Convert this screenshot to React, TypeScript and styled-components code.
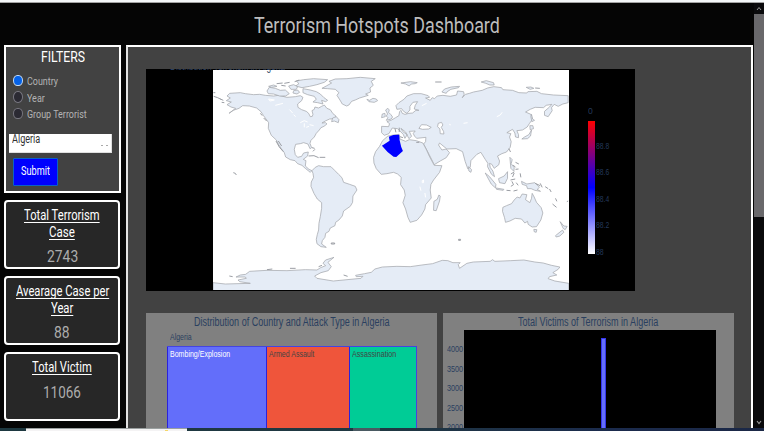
import React, { useLayoutEffect, useRef, useState } from "react";
import styled, { createGlobalStyle } from "styled-components";

const GlobalStyle = createGlobalStyle`
  * { box-sizing: border-box; }
  html, body { margin: 0; padding: 0; background: #050505; overflow: hidden; }
  body { font-family: Roboto, "Liberation Sans", sans-serif; }
`;

const FitBox = styled.span<{ $w: number }>`
  display: block;
  flex: none;
  width: ${(p) => p.$w}px;
  white-space: nowrap;
`;
const FitInner = styled.span`
  display: inline-block;
  vertical-align: top;
  transform-origin: 0 50%;
`;

/** Condenses a single line of text to a fixed width. */
function Fit({ w, children }: { w: number; children: React.ReactNode }) {
  const ref = useRef<HTMLSpanElement>(null);
  const [scale, setScale] = useState(1);
  useLayoutEffect(() => {
    if (ref.current) setScale(w / ref.current.offsetWidth);
  }, [w]);
  return (
    <FitBox $w={w}>
      <FitInner ref={ref} style={{ transform: `scaleX(${scale})` }}>
        {children}
      </FitInner>
    </FitBox>
  );
}

const Page = styled.div`
  width: 764px;
  height: 431px;
  display: flex;
  flex-direction: column;
  overflow: hidden;
  background: #050505;
`;
const TopStrip = styled.div`
  flex: none;
  height: 3px;
  background: #f4f7f8;
  border-bottom: 1px solid #a3a3a3;
`;
const Viewport = styled.div`
  height: 425px;
  display: grid;
  grid-template-columns: 754px 10px;
`;
const Content = styled.div`
  display: flex;
  flex-direction: column;
  min-height: 0;
`;
const Header = styled.header`
  flex: none;
  height: 42px;
  padding-left: 254px;
  padding-top: 1px;
  color: #bdbdbd;
  font-size: 22.5px;
  line-height: 43px;
`;
const Body = styled.div`
  height: 383px;
  display: grid;
  grid-template-columns: 117px 627px;
  column-gap: 5px;
  padding-left: 4px;
`;
const Sidebar = styled.aside`
  display: flex;
  flex-direction: column;
  gap: 7px;
`;
const Filters = styled.section`
  flex: none;
  height: 148px;
  border: 2px solid #fff;
  background: #424242;
  padding-left: 3px;
`;
const FilterTitle = styled.h2`
  margin: 0 0 6px 32px;
  padding-top: 1px;
  height: 19px;
  font-weight: 400;
  font-size: 15.5px;
  line-height: 18px;
  color: #fff;
`;
const Option = styled.label`
  display: flex;
  align-items: center;
  gap: 4px;
  height: 16.6px;
  padding-left: 4px;
  color: #b4b4b4;
  font-size: 11.5px;
  line-height: 16px;
  & > :last-child {
    padding-top: 2px;
  }
`;
const Radio = styled.span<{ $on?: boolean }>`
  width: 9.5px;
  height: 11.5px;
  border-radius: 50%;
  border: 1px solid ${(p) => (p.$on ? "#c4dcf7" : "#77767f")};
  background: ${(p) => (p.$on ? "#0562e8" : "#2b2a33")};
`;
const Select = styled.div`
  display: flex;
  justify-content: space-between;
  width: 103px;
  height: 19px;
  margin-top: 12px;
  padding: 0 3px 0 2.5px;
  background: #fff;
  border: 1px solid #e0e0e0;
  border-width: 0 1px 1px 0;
  color: #333;
  font-size: 12px;
  line-height: 10px;
`;
const SelectDots = styled.span`
  display: flex;
  gap: 3px;
  padding-top: 11px;
  &::before, &::after {
    content: "";
    width: 2px;
    height: 1.5px;
    background: #aaa;
  }
`;
const Submit = styled.button`
  display: flex;
  justify-content: center;
  align-items: center;
  width: 45px;
  height: 28px;
  margin: 5px 0 0 4px;
  padding: 0 0 1px;
  background: #0000fe;
  border: 1px solid #0b60c8;
  border-radius: 1px;
  color: #fff;
  font: 12px Roboto, sans-serif;
`;
const Stat = styled.section`
  flex: none;
  display: flex;
  flex-direction: column;
  align-items: center;
  width: 116px;
  height: 69px;
  padding-top: 5px;
  border: 2px solid #fff;
  border-radius: 4px;
  background: #272727;
`;
const StatTitle = styled.div`
  height: 16.7px;
  color: #fff;
  font-size: 14px;
  line-height: 17px;
  & ${FitInner} {
    text-decoration: underline;
    text-decoration-thickness: 1px;
    text-underline-offset: 2px;
    text-decoration-skip-ink: none;
  }
`;
const StatValue = styled.div`
  margin-top: 6px;
  color: #adadad;
  font-size: 17px;
  line-height: 20px;
`;
const Main = styled.main`
  height: 383px;
  border: 2px solid #fff;
  border-bottom: 0;
  border-left-color: #e2e2e2;
  background: #424242;
  padding: 22px 0 0 18px;
  display: flex;
  flex-direction: column;
  overflow: hidden;
`;
const MapPanel = styled.section`
  flex: none;
  position: relative;
  display: flex;
  width: 489px;
  height: 222px;
  padding: 1px 0 0 67px;
  background: #000;
  overflow: hidden;
`;
const MapTitle = styled.div`
  position: absolute;
  left: 24px;
  top: -10px;
  color: #2a3f5f;
  font: 12px/14px "Liberation Sans", sans-serif;
`;
const MapSvg = styled.svg`
  display: block;
  flex: none;
  width: 355.5px;
  height: 220px;
  background: #fff;
`;
const Legend = styled.div`
  margin-left: 19px;
  padding-top: 36px;
  color: #24395a;
  font: 9.5px/10px "Liberation Sans", sans-serif;
`;
const LegendBody = styled.div`
  display: flex;
  gap: 1px;
  margin-top: 5px;
`;
const LegendBar = styled.div`
  width: 7px;
  height: 133px;
  background: linear-gradient(#f00, #00f 50%, #fff);
`;
const LegendTicks = styled.div`
  display: flex;
  flex-direction: column;
  gap: 16.4px;
  padding-top: 20px;
`;
const Charts = styled.div`
  flex: none;
  display: flex;
  gap: 6px;
  height: 140px;
  margin-top: 22px;
`;
const Card = styled.section`
  width: 291px;
  height: 140px;
  background: #808080;
  color: #2a3f5f;
  font-family: "Liberation Sans", sans-serif;
`;
const CardTitle = styled.h3<{ $left: number }>`
  margin: 0;
  height: 17px;
  padding: 2px 0 0 ${(p) => p.$left}px;
  font-weight: 400;
  font-size: 12px;
  line-height: 15px;
`;
const TreeRoot = styled.div`
  height: 16px;
  padding: 1px 0 0 23.5px;
  font-size: 9.5px;
  line-height: 12px;
`;
const Treemap = styled.div`
  display: grid;
  grid-template-columns: 98.5px 83px 67px;
  width: 249.5px;
  height: 110px;
  margin-left: 21px;
  border: 1px solid #4444e0;
  border-left-width: 0;
`;
const Cell = styled.div<{ $bg: string; $fg: string }>`
  padding: 1px 0 0 2px;
  border-left: 1px solid #2b22dd;
  background: ${(p) => p.$bg};
  color: ${(p) => p.$fg};
  font-size: 9.5px;
  line-height: 12px;
`;
const Chart = styled.div`
  display: flex;
`;
const Axis = styled.div`
  width: 20.5px;
  padding: 14px 0 0 4px;
  font-size: 9.5px;
  line-height: 10px;
  display: flex;
  flex-direction: column;
  gap: 9.6px;
`;
const Plot = styled.div`
  display: flex;
  flex-direction: column;
  align-items: center;
  width: 252.5px;
  height: 110px;
  padding: 5px 0 0 27px;
  background: #000;
`;
const BarMark = styled.div`
  width: 3px;
  height: 1px;
  background: #2c3d58;
`;
const Bar = styled.div`
  flex: none;
  width: 5px;
  height: 110px;
  margin-top: 2.5px;
  border: 1px solid #3535ee;
  background: #636efa;
`;
const Scrollbar = styled.div`
  height: 425px;
  display: flex;
  flex-direction: column;
  align-items: center;
  background: #0a0a0c;
`;
const Thumb = styled.div`
  width: 10px;
  height: 203px;
  background: #69686b;
`;
const Arrow = styled.svg`
  flex: none;
  display: block;
  width: 10px;
  height: 11px;
`;
const Spacer = styled.div`
  flex: 1;
`;
const Taskbar = styled.footer`
  height: 3px;
  display: flex;
  background: linear-gradient(90deg, #1d3840 0%, #203842 50%, #1b2b4d 80%, #1b2846);
`;
const TaskSearch = styled.div`
  display: flex;
  justify-content: flex-end;
  width: 161px;
  height: 3px;
  margin-left: 26px;
  padding: 1px 19px 0 0;
  background: #f4f3f4;
  border-top: 1px solid #9aa0a0;
`;
const TaskSpark = styled.span`
  width: 3px;
  height: 1px;
  background: #f5d76a;
`;
const TaskItem = styled.div`
  width: 27px;
  margin-left: 166px;
  background: #4a5a62;
`;

const LAND = [
  // North America
  "M-220,108L-212,100L-180,98L-165,101L-140,104L-122,103L-105,106L-80,108L-65,106L-40,112L-15,110L0,107L8,112L4,122L-8,132L-7,142L4,149L18,154L25,160L30,170L36,169L38,163L35,152L42,148L44,141L55,144L64,139L72,135L80,145L90,149L98,161L107,168L105,176L88,177L75,183L65,189L76,188L80,192L71,199L62,203L57,210L48,220L42,231L32,241L29,250L34,263L29,266L23,252L10,248L0,251L-14,253L-18,268L-15,284L-8,292L4,289L10,279L24,276L22,288L9,298L17,302L15,318L26,328L35,332L30,337L15,325L5,316L-8,311L-16,302L-30,299L-44,291L-48,278L-57,266L-66,252L-72,240L-87,226L-96,205L-95,188L-103,177L-111,166L-118,155L-131,144L-153,138L-173,137L-184,145L-201,151L-214,160L-194,145L-208,141L-220,134L-207,126L-222,122L-210,114Z",
  // Greenland
  "M65,85L78,78L94,69L86,64L105,57L140,56L180,52L225,56L213,64L219,76L209,84L211,96L196,102L204,106L178,114L165,120L154,124L146,135L139,138L126,132L119,120L110,106L116,98L105,88L82,86Z",
  // Arctic islands
  "M-100,93L-93,82L-75,85L-60,91L-45,90L-33,101L-44,108L-62,108L-80,102L-96,101Z",
  "M-12,63L10,59L40,56L82,59L72,67L50,74L28,79L5,83L-14,78L-4,71Z",
  "M8,86L30,90L48,95L60,102L70,112L82,121L76,125L64,121L68,132L52,128L38,126L48,118L42,109L22,104L8,98Z",
  "M-35,78L-20,74L-8,80L-12,88L-28,88Z",
  "M-20,92L-8,90L-2,97L-10,102L-22,99Z",
  "M-95,79L-80,75L-70,79L-86,82Z",
  "M97,174L108,170L116,179L114,188L102,183L94,185Z",
  // South America
  "M35,332L45,322L55,317L70,320L92,320L104,332L115,343L125,353L130,367L148,373L165,379L170,390L158,408L157,427L150,439L130,453L126,468L116,480L106,487L104,497L90,504L86,514L76,520L74,532L66,542L64,552L78,562L62,560L50,551L48,538L51,524L55,510L56,490L60,470L64,445L64,428L51,417L41,400L32,379L33,366L40,352L38,340Z",
  // Iceland, British Isles
  "M200,118L208,121L218,115L228,117L232,122L222,127L206,125Z",
  "M256,150L263,145L267,150L265,157L272,164L277,171L273,177L258,181L263,173L258,168L262,162Z",
  "M246,162L254,160L255,170L244,173Z",
  // Eurasia
  "M244,199L265,200L268,191L260,185L274,180L286,173L296,167L298,155L302,151L306,160L314,163L326,160L337,159L347,151L356,151L342,147L345,136L352,125L338,127L329,139L329,150L320,160L310,154L304,146L290,148L287,137L296,128L311,118L320,108L340,101L363,101L384,107L388,112L376,114L390,121L396,113L403,116L411,108L428,106L450,109L469,105L472,93L490,95L492,103L486,113L496,103L508,100L520,96L546,91L562,84L581,80L604,83L608,89L637,91L656,98L680,99L683,95L710,94L724,101L760,105L804,107L804,128L788,132L774,139L762,133L754,143L756,152L744,170L733,166L733,154L748,141L755,133L738,136L730,143L705,142L690,148L676,156L692,163L697,178L688,190L681,201L667,210L650,212L655,224L655,233L646,231L644,219L637,208L620,218L632,221L628,231L633,245L630,262L619,276L605,281L592,288L598,303L596,314L582,325L575,313L568,310L570,322L578,333L583,350L574,343L562,320L563,310L555,298L542,277L530,283L512,302L510,322L503,327L495,305L487,275L468,266L440,267L418,249L415,255L425,270L438,267L448,278L438,293L420,303L402,314L387,284L370,252L376,245L377,232L350,235L343,229L339,220L345,213L327,214L334,229L326,236L316,216L302,205L308,215L321,224L314,235L309,223L292,206L276,204L266,221L252,226L244,218Z",
  // Africa
  "M263,228L280,225L296,223L299,237L316,244L327,239L348,242L368,249L379,270L387,288L402,316L425,317L418,337L400,360L392,373L390,390L393,414L376,434L374,447L364,465L350,481L330,487L323,472L316,447L308,428L315,406L312,390L301,374L303,352L292,342L280,337L260,341L243,343L228,326L221,309L220,292L226,275L238,259L247,242Z",
  "M416,405L420,408L418,423L408,452L400,451L401,424L411,418Z",
  // Australia and New Guinea
  "M608,442L619,437L634,431L642,420L651,411L659,414L666,402L680,404L676,419L689,428L694,415L696,400L702,411L709,427L723,443L728,459L722,480L709,500L696,501L684,493L682,484L674,489L664,477L645,475L629,483L616,487L613,473L607,454Z",
  "M701,508L710,509L708,517L702,515Z",
  "M664,364L680,372L704,368L718,382L711,388L721,394L704,391L693,386L682,386L679,377L666,373Z",
  // Indonesia, Philippines and Japan
  "M555,339L568,350L587,373L586,384L573,372Z",
  "M588,384L611,388L609,391L589,388Z",
  "M595,356L612,348L622,335L622,355L614,371L598,368Z",
  "M694,163L697,177L703,181L695,185L692,170Z",
  "M689,197L698,197L700,206L690,209ZM694,210L691,228L682,236L665,237L673,231L686,224Z",
  "M629,292L636,299L633,311L642,323L641,334L632,325Z",
  "M505,320L514,329L512,337L506,333Z",
  // New Zealand
  "M780,485L791,498L801,499L795,509L789,505ZM787,510L791,517L779,528L768,531L766,527Z",
  // Novaya Zemlya, Svalbard, northern islands
  "M425,96L433,87L453,81L478,79L475,83L452,88L441,95L438,100Z",
  "M302,69L331,65L351,68L345,71L333,72L327,78L316,72Z",
  "M543,66L558,62L580,68L582,75L569,75L557,70Z",
  "M678,82L692,81L701,85L690,88Z",
  // Antarctica
  "M-262,668L-225,672L-150,670L-182,665L-187,660L-162,655L-165,651L-193,651L-180,645L-164,643L-152,634L-100,631L-40,632L15,629L50,630L61,623L76,617L68,610L76,600L101,592L83,607L93,620L84,632L62,638L43,648L50,655L99,663L182,655L188,649L168,650L166,646L193,641L213,637L224,627L246,621L290,619L330,620L365,615L397,611L426,601L443,602L458,608L480,608L474,614L478,625L500,610L519,606L570,604L577,599L584,604L632,602L671,600L704,606L729,609L754,616L779,621L774,628L758,638L770,645L748,650L744,656L764,663L806,670L806,692L-262,692Z",
];

const ISLES =
  "M-261,98h6M-260,109l12,4l10,5M-240,117l9,4M-236,127l8,1M-201,338l6,2l3,5M-120,160l6,7M-110,174l9,9M-73,243l10,18l12,14M-66,243l10,15M-71,71l18,-2M-57,76l13,2M-48,70l16,-3M-17,65l14,-5M38,274l6,-6M25,288l16,-1l14,6M58,292l17,0M35,263l8,2M284,205l3,12M297,203l0,13M299,230l9,3M348,247h9M405,66h19M705,84l14,1M626,266l5,10M646,307l10,5M639,315l7,7M646,328l9,-1M632,342l10,-6M642,339l-5,12M631,360l14,-3M635,364l5,10l-8,5M648,368l6,8M660,340l2,12M619,391l12,1M640,393l12,-3M705,370l15,7M720,370l6,12M735,380l9,6M748,387l5,9M766,415l4,9M757,432l12,10M800,425l4,-2M475,541h6v-3h-6zM93,549h10v3h-10zM-100,629l16,-2M-31,625l17,0M-213,648l10,2M55,620l10,-4M130,645l12,4";
const LAKES =
  "M-95,117l17,3l-13,3zM-75,136l23,-6M-32,149l9,10M-20,164l6,6M0,188l12,-6l10,4M12,190l0,12M18,202l8,-3M28,194l12,3M365,137l14,-7M590,170l10,-5l6,-8M490,190l12,-2M447,193h3v3M366,362l4,-2v8h-4zM359,380l3,12M374,399l2,13";

function WorldMap() {
  return (
    <MapSvg viewBox="-262 30 1067 660" preserveAspectRatio="none">
      <g fill="#e5ecf6" stroke="#a3a6ac" strokeWidth="2.2" strokeLinejoin="round">
        {LAND.map((d) => (
          <path key={d} d={d} />
        ))}
        <path d="M356,205L364,194L379,195L393,202L385,207L367,208Z" fill="#fff" />
        <path d="M414,190L424,187L428,195L423,202L430,214L431,222L420,221L419,207L412,200Z" fill="#fff" />
      </g>
      <path d={ISLES} fill="none" stroke="#9b9ea4" strokeWidth="3" />
      <path d={LAKES} fill="none" stroke="#fff" strokeWidth="3" />
      <path d="M266,230L279,225L297,224L298,240L303,261L308,273L288,291L280,290L262,276L245,257L268,242Z" fill="#00f" />
    </MapSvg>
  );
}

function StatCard({ title, value, w }: { title: [string, number][]; value: string; w: number }) {
  return (
    <Stat>
      {title.map(([line, width]) => (
        <StatTitle key={line}>
          <Fit w={width}>{line}</Fit>
        </StatTitle>
      ))}
      <StatValue>
        <Fit w={w}>{value}</Fit>
      </StatValue>
    </Stat>
  );
}

export default function App() {
  return (
    <>
      <GlobalStyle />
      <Page>
        <TopStrip />
        <Viewport>
          <Content>
            <Header>
              <Fit w={246}>Terrorism Hotspots Dashboard</Fit>
            </Header>
            <Body>
              <Sidebar>
                <Filters>
                  <FilterTitle>
                    <Fit w={44}>FILTERS</Fit>
                  </FilterTitle>
                  <Option>
                    <Radio $on />
                    <Fit w={31}>Country</Fit>
                  </Option>
                  <Option>
                    <Radio />
                    <Fit w={18}>Year</Fit>
                  </Option>
                  <Option>
                    <Radio />
                    <Fit w={60}>Group Terrorist</Fit>
                  </Option>
                  <Select>
                    <Fit w={28}>Algeria</Fit>
                    <SelectDots />
                  </Select>
                  <Submit>
                    <Fit w={29}>Submit</Fit>
                  </Submit>
                </Filters>
                <StatCard title={[["Total Terrorism", 76], ["Case", 25.5]]} value="2743" w={31} />
                <StatCard title={[["Avearage Case per", 93], ["Year", 22.5]]} value="88" w={15.5} />
                <StatCard title={[["Total Victim", 60]]} value="11066" w={38} />
              </Sidebar>
              <Main>
                <MapPanel>
                  <MapTitle>
                    <Fit w={115}>Distribution Terrorism in Algeria</Fit>
                  </MapTitle>
                  <WorldMap />
                  <Legend>
                    <Fit w={4.5}>0</Fit>
                    <LegendBody>
                      <LegendBar />
                      <LegendTicks>
                        {["88.8", "88.6", "88.4", "88.2"].map((t) => (
                          <Fit key={t} w={13.5}>{t}</Fit>
                        ))}
                        <Fit w={8}>88</Fit>
                      </LegendTicks>
                    </LegendBody>
                  </Legend>
                </MapPanel>
                <Charts>
                  <Card>
                    <CardTitle $left={48}>
                      <Fit w={195.5}>Distribution of Country and Attack Type in Algeria</Fit>
                    </CardTitle>
                    <TreeRoot>
                      <Fit w={22}>Algeria</Fit>
                    </TreeRoot>
                    <Treemap>
                      <Cell $bg="#636efa" $fg="#fff">
                        <Fit w={60}>Bombing/Explosion</Fit>
                      </Cell>
                      <Cell $bg="#ef553b" $fg="#444">
                        <Fit w={45}>Armed Assault</Fit>
                      </Cell>
                      <Cell $bg="#00cc96" $fg="#444">
                        <Fit w={44.5}>Assassination</Fit>
                      </Cell>
                    </Treemap>
                  </Card>
                  <Card>
                    <CardTitle $left={75}>
                      <Fit w={140}>Total Victims of Terrorism in Algeria</Fit>
                    </CardTitle>
                    <Chart>
                      <Axis>
                        {["4000", "3500", "3000", "2500", "2000"].map((t) => (
                          <Fit key={t} w={16}>{t}</Fit>
                        ))}
                      </Axis>
                      <Plot>
                        <BarMark />
                        <Bar />
                      </Plot>
                    </Chart>
                  </Card>
                </Charts>
              </Main>
            </Body>
          </Content>
          <Scrollbar>
            <Arrow viewBox="0 0 10 11">
              <path d="M3 7L5 4.5L7 7" fill="none" stroke="#9a9a9a" />
            </Arrow>
            <Thumb />
            <Spacer />
            <Arrow viewBox="0 0 10 11">
              <path d="M3 4L5 6.5L7 4" fill="none" stroke="#9a9a9a" strokeWidth="1.2" />
            </Arrow>
          </Scrollbar>
        </Viewport>
        <Taskbar>
          <TaskSearch>
            <TaskSpark />
          </TaskSearch>
          <TaskItem />
        </Taskbar>
      </Page>
    </>
  );
}
